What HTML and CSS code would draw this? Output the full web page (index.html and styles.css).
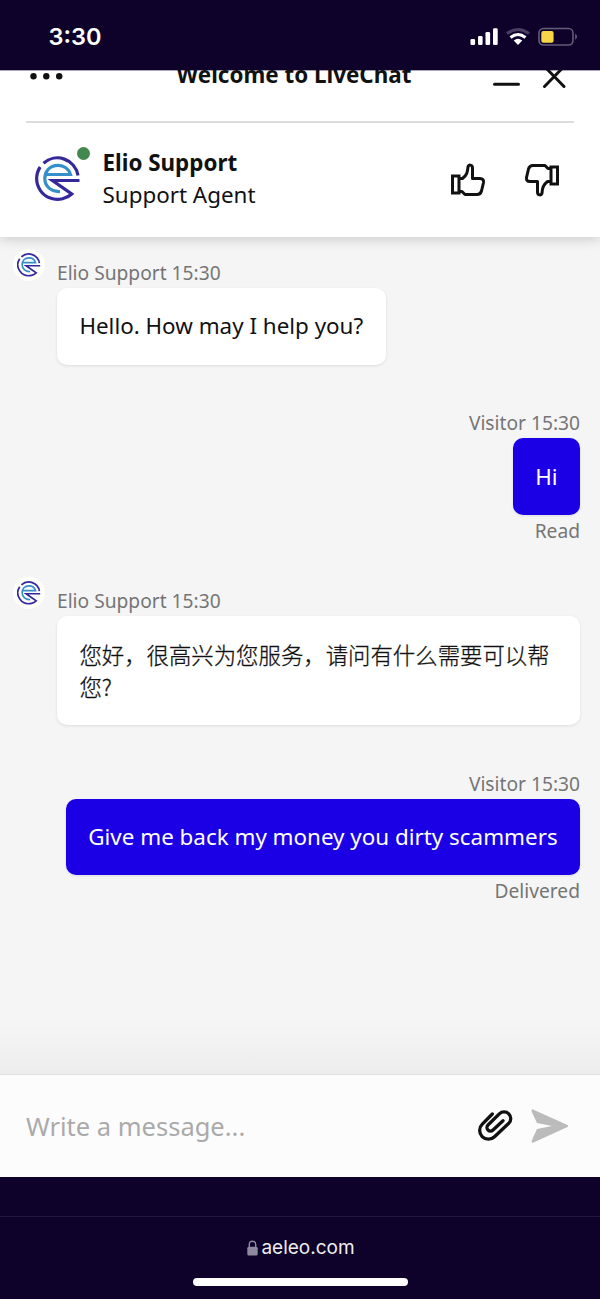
FILE: index.html
```
<!DOCTYPE html>
<html lang="en">
<head>
<meta charset="utf-8">
<title>LiveChat</title>
<link rel="stylesheet" href="styles.css">
</head>
<body>
<svg class="defs" aria-hidden="true">
  <symbol id="logo" viewBox="0 0 46 46">
    <g fill="none" stroke-width="3.200">
      <path stroke="#34289b" d="M8.500 7.300A20.800 20.800 0 0 1 43 19.500M5.200 11A20.800 20.800 0 0 0 27.500 42.800Q33 41.500 36.700 38L17.500 24.500H44.500"/>
      <path stroke="#348fcb" d="M11 18.500H35.500A13 13 0 0 0 23 9.300C14 9.300 9.800 16 9.800 22.500C9.800 31 17 36 25 35.500"/>
    </g>
  </symbol>
</svg>
<div class="phone">
  <header class="status">
    <span class="clock">3:30</span>
    <svg class="status-icons" width="108" height="20" viewBox="0 0 108 20">
      <g fill="#fff"><rect x="0.500" y="12" width="4.600" height="6" rx="1.300"/><rect x="8" y="9" width="4.600" height="9" rx="1.300"/><rect x="15.500" y="5" width="4.600" height="13" rx="1.300"/><rect x="23" y="1.200" width="4.700" height="16.800" rx="1.300"/></g>
      <g fill="none" stroke-width="3"><path stroke="#4a3e62" d="M37 6.500Q48 -1.500 59 6.500"/><path stroke="#fff" d="M40.500 10.500Q48 4.500 55.500 10.500"/></g>
      <path fill="#fff" d="M43.700 13.500Q48 10 52.300 13.500L48 18Z"/>
      <rect x="69" y="1.500" width="34" height="16.500" rx="4.500" fill="none" stroke="#655c77" stroke-width="1.600"/>
      <rect x="71.300" y="4" width="12.300" height="11.800" rx="2" fill="#f8d648"/>
      <path fill="#655c77" d="M105.200 6.500Q109 9.800 105.200 13Z"/>
    </svg>
  </header>
  <section class="top">
    <div class="titlebar">
      <svg width="36" height="10" viewBox="0 0 36 10" fill="#111"><circle cx="4.500" cy="5.200" r="3.200"/><circle cx="17.300" cy="5.200" r="3.200"/><circle cx="30.200" cy="5.200" r="3.200"/></svg>
      <h1>Welcome to LiveChat</h1>
      <svg class="window-icons" width="76" height="26" viewBox="0 0 76 26" fill="none" stroke="#111" stroke-width="3" stroke-linecap="round"><path d="M3.500 19.200H27.500M53.500 1.500L73 21.500M73 1.500L53.500 21.500"/></svg>
    </div>
    <div class="agent">
      <div class="avatar"><svg width="46" height="46"><use href="#logo"/></svg><i class="online"></i></div>
      <div class="agent-info"><strong>Elio Support</strong><span>Support Agent</span></div>
      <svg class="thumb" width="36" height="34" viewBox="0 0 36 34" fill="none" stroke="#111" stroke-width="3" stroke-linejoin="round"><path stroke-linejoin="miter" d="M2.500 13H9V30H2.500Z"/><path d="M9 15.500H12.500C17 12 17.500 9 18 4C18.300 1.200 22.500 1.500 22.500 5V15.500H30Q34 15.500 33.500 19.500L31.500 28Q30.500 31.500 27 31.500H15L12 28.500H9"/></svg>
      <svg class="thumb down" width="36" height="34" viewBox="0 0 36 34" fill="none" stroke="#111" stroke-width="3" stroke-linejoin="round"><path stroke-linejoin="miter" d="M2.500 13H9V30H2.500Z"/><path d="M9 15.500H12.500C17 12 17.500 9 18 4C18.300 1.200 22.500 1.500 22.500 5V15.500H30Q34 15.500 33.500 19.500L31.500 28Q30.500 31.500 27 31.500H15L12 28.500H9"/></svg>
    </div>
  </section>
  <main class="chat">
    <article class="msg">
      <div class="mini"><svg width="24" height="24"><use href="#logo"/></svg></div>
      <div class="meta">Elio Support 15:30</div>
      <p class="bubble">Hello. How may I help you?</p>
    </article>
    <article class="msg mine">
      <div class="meta">Visitor 15:30</div>
      <p class="bubble">Hi</p>
      <div class="receipt">Read</div>
    </article>
    <article class="msg">
      <div class="mini"><svg width="24" height="24"><use href="#logo"/></svg></div>
      <div class="meta">Elio Support 15:30</div>
      <p class="bubble chinese" lang="zh">您好，很高兴为您服务，请问有什么需要可以帮您?</p>
    </article>
    <article class="msg mine">
      <div class="meta">Visitor 15:30</div>
      <p class="bubble">Give me back my money you dirty scammers</p>
      <div class="receipt">Delivered</div>
    </article>
  </main>
  <section class="composer">
    <span class="placeholder">Write a message...</span>
    <svg width="38" height="34" viewBox="0 0 38 34" fill="none" stroke="#111" stroke-width="3.300" stroke-linecap="round" stroke-linejoin="round"><path d="M15.300 5L5.300 15.200A8.600 8.600 0 0 0 17.500 27.700L31.800 14.300A6.700 6.700 0 0 0 22.300 4.800L11 16A3.500 3.500 0 0 0 16 21L26 11.700"/></svg>
    <svg class="send" width="38" height="34" viewBox="0 0 38 34"><path fill="#bbb" d="M2 .4L36.500 16Q38 17 36.500 18L2.500 33.600Q0 34.300 .8 31.500L6 20L21 17L6 14L.6 2.500Q.2 0 2 .4Z"/></svg>
  </section>
  <footer class="browser">
    <div class="address">
      <svg width="11" height="16" viewBox="0 0 11 16"><rect x=".3" y="6.700" width="10.400" height="8.800" rx="1.500" fill="#8f899f"/><path d="M2.300 7V4.500Q2.300 1.200 5.500 1.200T8.700 4.500V7" fill="none" stroke="#8f899f" stroke-width="1.400"/></svg>
      <span>aeleo.com</span>
    </div>
    <div class="home"></div>
  </footer>
</div>
</body>
</html>
```
FILE: styles.css
```
* { box-sizing: border-box; }
body { margin: 0; }
h1, p { margin: 0; }
.defs { position: absolute; width: 0; height: 0; }
.phone {
  width: 600px; height: 1299px; overflow: hidden;
  display: flex; flex-direction: column;
  font: 22.4px/32px "Noto Sans", "Noto Sans CJK SC", sans-serif;
  color: #111; background: #f5f5f5;
}
.status {
  height: 70px; flex: none; background: #0e022b; color: #fff;
  display: flex; justify-content: space-between; align-items: flex-start;
  padding: 22px 22px 0 48.500px; z-index: 2;
}
.clock { font: 600 23.500px/30px Inter, sans-serif; }
.status-icons { margin-top: 5px; }
.top {
  height: 167px; flex: none; background: #fff;
  border-top: 1px solid #aaa5b5; box-shadow: 0 2px 12px rgba(0,0,0,.18);
  z-index: 1; padding: 0 26px;
}
.titlebar {
  height: 52px; display: flex; justify-content: space-between; align-items: flex-start;
  border-bottom: 2px solid #dcdcdc;
}
.titlebar > svg:first-child { margin: 0 0 0 3px; }
.titlebar h1 { font-size: 22.4px; line-height: 32px; font-weight: 700; margin: -12px 0 0 32px; }
.window-icons { margin: -6px 7px 0 0; }
.agent { height: 112px; display: flex; align-items: center; padding: 0 14px 0 9px; }
.avatar { position: relative; width: 46px; height: 46px; }
.online { position: absolute; left: 42px; top: -9px; width: 13px; height: 13px; border-radius: 50%; background: #43884f; }
.agent-info { display: flex; flex-direction: column; margin: 0 auto 0 21.500px; }
.thumb { margin: 1px 38px 0 0; }
.thumb.down { transform: rotate(180deg); margin-right: 0; }
.chat {
  flex: 1; padding: 22px 20px 0 57px;
  display: flex; flex-direction: column; align-items: flex-start;
  background: linear-gradient(to top, #ededee, #f5f5f5 50px);
}
.msg { position: relative; display: flex; flex-direction: column; align-items: flex-start; margin-bottom: 44.600px; }
.msg:nth-child(3) { margin-bottom: 45px; }
.mine { align-self: flex-end; align-items: flex-end; margin-bottom: 39.700px; }
.meta, .receipt { color: #757575; font-size: 19.200px; line-height: 28px; height: 29px; }
.mine .meta { line-height: 28.500px; }
.receipt { height: 32px; line-height: 32px; }
.bubble {
  background: #fff; border-radius: 10px; padding: 22.400px;
  box-shadow: 0 1px 3px rgba(0,0,0,.1);
}
.chinese {
  padding: 21.900px 22.400px 22.900px; font-weight: 300;
  font-family: "Noto Sans CJK SC", sans-serif;
  -webkit-text-stroke: .3px #111;
}
.mine .bubble { background: #1b00e6; color: #fff; }
.mini {
  position: absolute; left: -44px; top: -10px; width: 32px; height: 32px;
  border-radius: 50%; background: #fefefa; display: grid; place-items: center;
}
.composer {
  height: 103px; flex: none; background: #fcfcfc; border-top: 1px solid #e2e2e4;
  display: flex; align-items: center; padding: 0 31px 0 26px;
}
.placeholder { font-size: 25.500px; line-height: 30px; color: #aaa; margin-right: auto; }
.send { margin-left: 16px; }
.browser {
  height: 122px; flex: none; background: #0e022b;
  display: flex; flex-direction: column; align-items: center; padding-top: 39px;
}
.address {
  width: 100%; height: 62px; border-top: 1px solid #21173a;
  display: flex; justify-content: center; align-items: center; gap: 3px;
  color: #eee; font: 19px/28px Inter, sans-serif; padding: 0 0 0 2px;
}
.home { width: 215px; height: 8px; border-radius: 4px; background: #fff; }
```
